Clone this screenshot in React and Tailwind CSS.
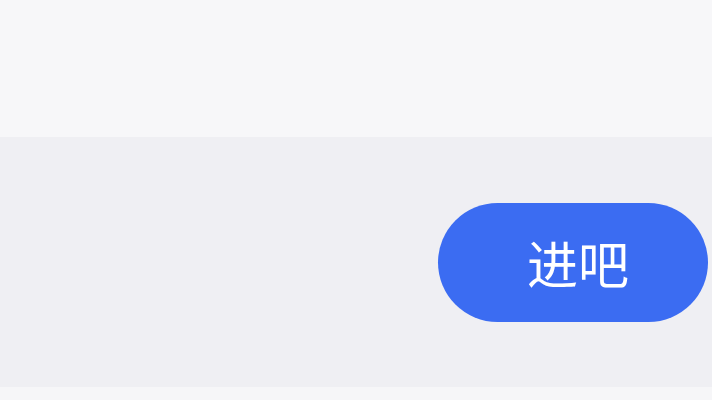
export default function App() {
  return (
    <div className="w-[712px] h-[400px] flex flex-col bg-[#f7f7f9] overflow-hidden" style={{ fontFamily: '"Noto Sans CJK SC", "Noto Sans", sans-serif' }}>
      <div className="h-[137px] bg-[#f7f7f9]" />
      <div className="h-[250px] bg-[#efeff3] flex items-center justify-end pr-[4px]">
        <button className="w-[270px] h-[119px] rounded-full bg-[#3b6cf2] text-white text-[51px] leading-none flex items-center justify-center pl-[10px]">
          进吧
        </button>
      </div>
      <div className="flex-1 bg-[#f6f6f8]" />
    </div>
  );
}
